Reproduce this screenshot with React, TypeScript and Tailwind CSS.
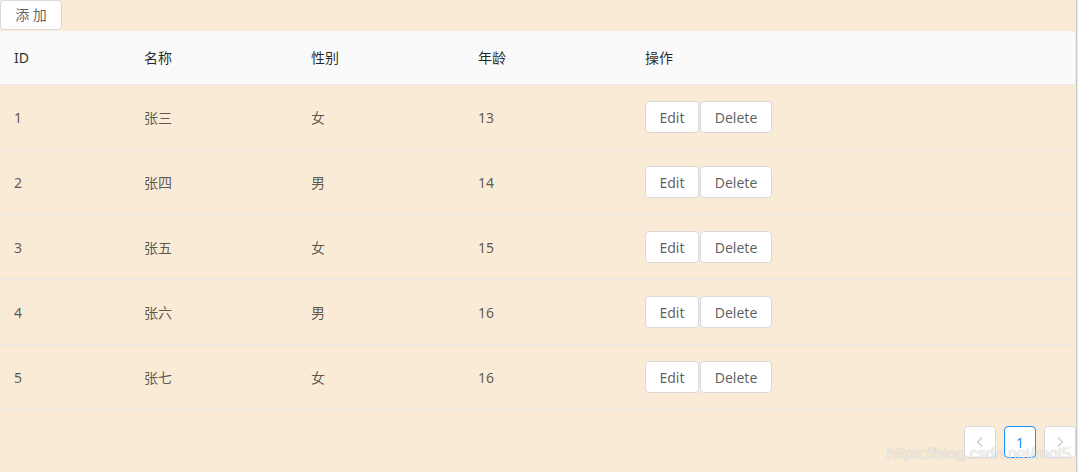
import React from "react";

const rows = [
  { id: 1, name: "张三", sex: "女", age: 13 },
  { id: 2, name: "张四", sex: "男", age: 14 },
  { id: 3, name: "张五", sex: "女", age: 15 },
  { id: 4, name: "张六", sex: "男", age: 16 },
  { id: 5, name: "张七", sex: "女", age: 16 },
];

const font = { fontFamily: "'Noto Sans', 'Noto Sans CJK SC', sans-serif" };

export default function App() {
  return (
    <div
      className="relative w-[1078px] h-[472px] overflow-hidden bg-[#faebd7] text-[14px]"
      style={font}
    >
      <div className="h-[31px]">
        <button className="h-[30px] w-[62px] rounded-[4px] border border-[#d9d9d9] bg-white text-[14px] leading-none text-[rgba(0,0,0,0.65)] flex items-center justify-center">
          添 加
        </button>
      </div>

      <div className="w-[1075px]">
        <div className="grid grid-cols-[144px_167px_167px_167px_1fr] h-[54px] items-center bg-[#fafafa] rounded-t-[4px] border-b border-[#e8e8e8] text-[rgba(0,0,0,0.85)] font-normal">
          <div className="pl-[14px]">ID</div>
          <div>名称</div>
          <div>性别</div>
          <div>年龄</div>
          <div>操作</div>
        </div>
        {rows.map((r) => (
          <div
            key={r.id}
            className="grid grid-cols-[144px_167px_167px_167px_1fr] h-[65px] items-center border-b border-[#e8e8e8] text-[rgba(0,0,0,0.65)]"
          >
            <div className="pl-[14px]">{r.id}</div>
            <div>{r.name}</div>
            <div>{r.sex}</div>
            <div>{r.age}</div>
            <div className="flex gap-px">
              <button className="h-[32px] w-[54px] rounded-[4px] border border-[#d9d9d9] bg-white text-[14px] text-[rgba(0,0,0,0.65)] flex items-center justify-center">
                Edit
              </button>
              <button className="h-[32px] w-[72px] rounded-[4px] border border-[#d9d9d9] bg-white text-[14px] text-[rgba(0,0,0,0.65)] flex items-center justify-center">
                Delete
              </button>
            </div>
          </div>
        ))}
      </div>

      <div className="flex justify-end gap-[8px] mt-[16px] w-[1076px]">
        <div className="w-[32px] h-[32px] rounded-[4px] border border-[#d9d9d9] bg-white flex items-center justify-center">
          <svg width="12" height="12" viewBox="0 0 12 12" fill="none">
            <path d="M8 1.5 L3.5 6 L8 10.5" stroke="#c8c8c8" strokeWidth="1.2" />
          </svg>
        </div>
        <div className="w-[32px] h-[32px] rounded-[4px] border border-[#1890ff] bg-white flex items-center justify-center text-[#1890ff] text-[14px]">
          1
        </div>
        <div className="w-[32px] h-[32px] rounded-[4px] border border-[#d9d9d9] bg-white flex items-center justify-center">
          <svg width="12" height="12" viewBox="0 0 12 12" fill="none">
            <path d="M4 1.5 L8.5 6 L4 10.5" stroke="#c8c8c8" strokeWidth="1.2" />
          </svg>
        </div>
      </div>

      <div
        className="absolute left-[887px] top-[446px] text-[16px] leading-none text-[rgba(255,255,255,0.85)] [text-shadow:0_0_1px_rgba(0,0,0,0.35)]"
        style={{ fontFamily: "'Liberation Sans', Arial, sans-serif" }}
      >
        https://blog.csdn.net/root5
      </div>

      <div className="absolute top-0 bottom-0 left-[1076px] w-px bg-[#c9c9c9]" />
    </div>
  );
}
